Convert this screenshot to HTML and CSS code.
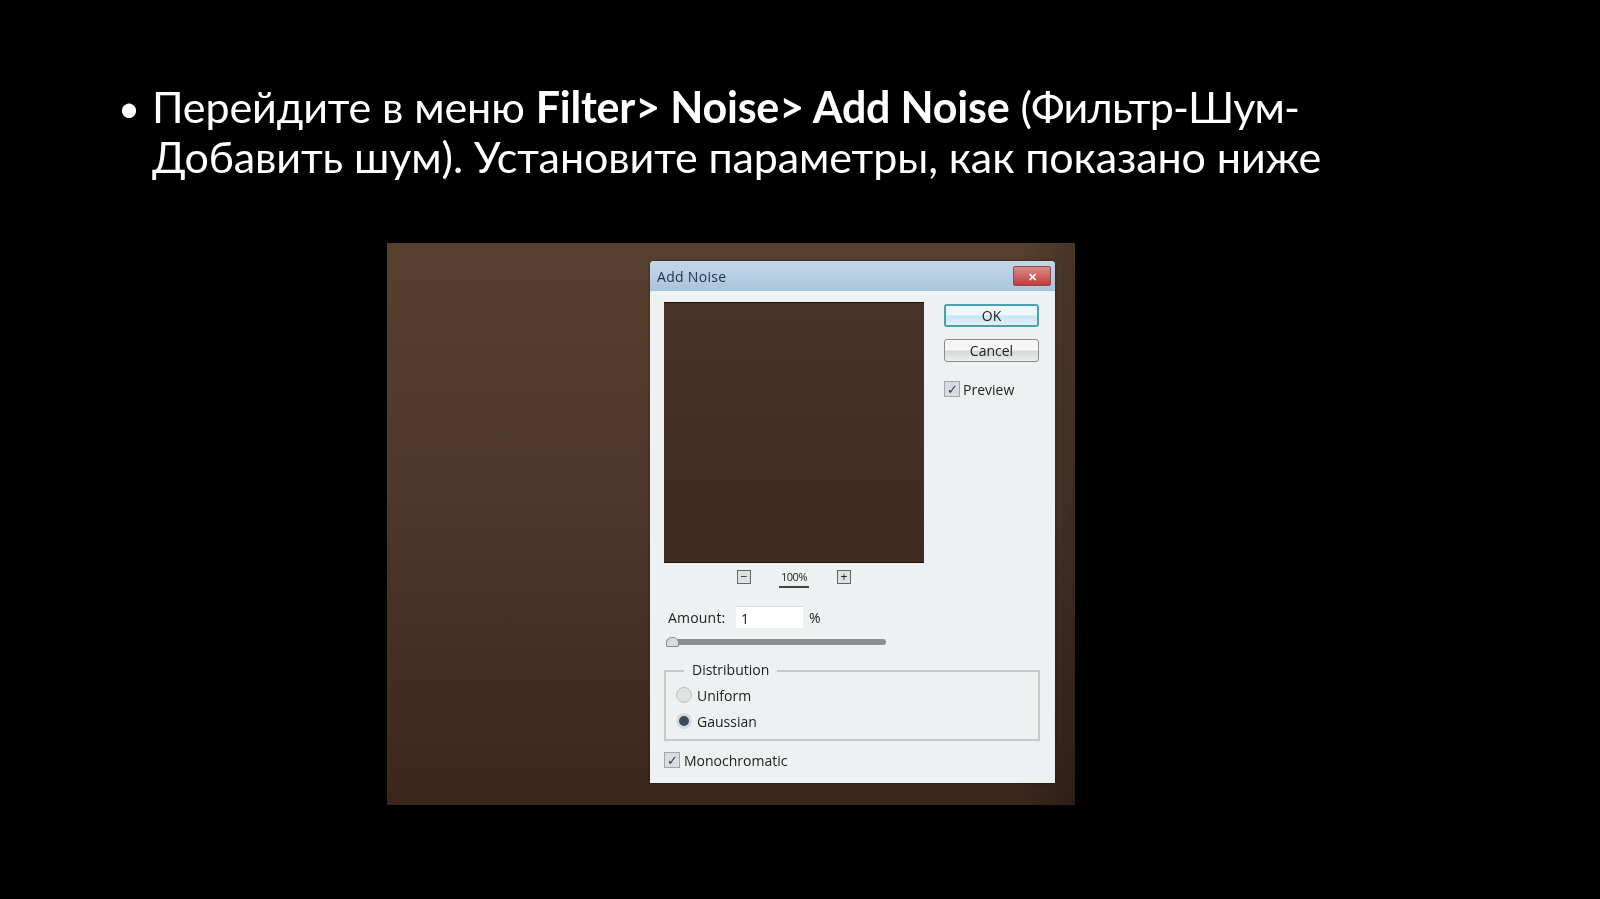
FILE: index.html
```html
<!DOCTYPE html>
<html lang="ru">
<head>
    <meta charset="UTF-8">
    <title>Add Noise</title>
    <link rel="stylesheet" href="styles.css">
</head>
<body>
    <div class="slide">
        <div class="point">
            <span class="bullet">•</span>
            <p>Перейдите в меню <b>Filter&gt; Noise&gt; Add Noise</b> <span class="tight">(Фильтр-Шум-</span>Добавить шум). Установите параметры, как показано ниже</p>
        </div>

        <div class="shot">
            <div class="dialog">
                <div class="titlebar">
                    <span class="title-text">Add Noise</span>
                    <span class="close">✕</span>
                </div>
                <div class="dialog-body">
                    <div class="main-col">
                        <div class="preview"></div>
                        <div class="zoom-row">
                            <span class="zoom-btn">−</span>
                            <span class="zoom-value">100%</span>
                            <span class="zoom-btn">+</span>
                        </div>
                        <div class="amount-row">
                            <span class="amount-label">Amount:</span>
                            <span class="amount-input">1</span>
                            <span>%</span>
                        </div>
                        <div class="slider"><span class="thumb"></span></div>
                    </div>
                    <div class="side-col">
                        <div class="btn btn-default">OK</div>
                        <div class="btn">Cancel</div>
                        <div class="check-row preview-row">
                            <span class="check">✓</span>
                            <span>Preview</span>
                        </div>
                    </div>
                </div>
                <div class="distribution">
                    <span class="legend">Distribution</span>
                    <div class="radio-row"><span class="radio"></span>Uniform</div>
                    <div class="radio-row"><span class="radio radio-on"></span>Gaussian</div>
                </div>
                <div class="check-row mono-row">
                    <span class="check">✓</span>
                    <span>Monochromatic</span>
                </div>
            </div>
        </div>
    </div>
</body>
</html>
```

FILE: styles.css
```css
html, body {
    margin: 0;
    height: 100%;
    background: #000;
}
.slide {
    height: 899px;
    overflow: hidden;
    padding-top: 82px;
    box-sizing: border-box;
}
.point {
    display: flex;
    padding-left: 118px;
    color: #fff;
    font-family: "Lato", "Liberation Sans", sans-serif;
    font-size: 43px;
    line-height: 50px;
    letter-spacing: -0.1px;
    filter: blur(0.3px);
}
.bullet {
    width: 34px;
    font-size: 38px;
}
.point p {
    margin: 0;
    width: 1190px;
}
.point b {
    letter-spacing: -0.2px;
}
.tight {
    letter-spacing: -0.8px;
}
.shot {
    width: 688px;
    height: 562px;
    margin: 61px 0 0 387px;
    padding: 18px 20px 22px 263px;
    box-sizing: border-box;
    background: linear-gradient(90deg, rgba(0,0,0,0) 92%, rgba(0,0,0,0.2) 100%), linear-gradient(180deg, #57402f 0%, #4e382c 45%, #3b261c 100%);
}
.dialog {
    height: 522px;
    border-radius: 4px 4px 0 0;
    background: #eef1f1;
    color: #222;
    font-family: "Open Sans", "Liberation Sans", sans-serif;
    font-size: 14px;
    box-shadow: 0 0 3px rgba(0,0,0,0.5);
    filter: blur(0.4px);
}
.titlebar {
    height: 30px;
    padding: 0 4px 0 7px;
    display: flex;
    justify-content: space-between;
    align-items: center;
    background: linear-gradient(180deg, #c5d7e8, #a9c4dc);
    color: #1f3147;
    border-radius: 4px 4px 0 0;
}
.title-text {
    letter-spacing: 0.3px;
}
.close {
    width: 38px;
    height: 20px;
    line-height: 20px;
    text-align: center;
    font-size: 11px;
    font-weight: bold;
    color: #fff;
    background: linear-gradient(180deg, #dc8c8c, #c23c3c);
    border: 1px solid #8e4a4a;
    box-sizing: border-box;
    border-radius: 2px;
}
.dialog-body {
    display: flex;
    padding: 11px 16px 0 14px;
}
.main-col {
    width: 260px;
}
.preview {
    width: 260px;
    height: 261px;
    background: linear-gradient(180deg, #493228, #3f2b20);
    border-top: 1px solid #1b100a;
    border-bottom: 1px solid #1b100a;
    box-sizing: border-box;
}
.zoom-row {
    display: flex;
    align-items: flex-start;
    padding: 7px 0 0 73px;
    height: 28px;
}
.zoom-btn {
    width: 14px;
    height: 14px;
    box-sizing: border-box;
    border: 1px solid #666;
    background: #dfe1e1;
    font-size: 12px;
    line-height: 11px;
    text-align: center;
}
.zoom-value {
    width: 30px;
    margin: 0 28px;
    font-size: 11px;
    line-height: 14px;
    padding-bottom: 2px;
    border-bottom: 2px solid #444;
    text-align: center;
    letter-spacing: -0.5px;
}
.amount-row {
    display: flex;
    align-items: center;
    height: 22px;
    margin-top: 8px;
    padding-left: 4px;
}
.amount-label {
    width: 68px;
    letter-spacing: 0.2px;
}
.amount-input {
    width: 67px;
    height: 22px;
    line-height: 24px;
    padding-left: 5px;
    margin-right: 6px;
    box-sizing: border-box;
    background: #fff;
    border-top: 1px solid #dcdcdc;
}
.slider {
    position: relative;
    width: 220px;
    height: 6px;
    margin: 11px 0 0 2px;
    background: #8e8f8c;
    border-radius: 3px;
}
.thumb {
    position: absolute;
    left: 0;
    top: -2px;
    width: 13px;
    height: 10px;
    box-sizing: border-box;
    border: 1px solid #8a8a8a;
    border-radius: 6px 6px 1px 1px;
    background: #dcdcd8;
}
.side-col {
    width: 96px;
    margin-left: 20px;
    padding-top: 2px;
}
.btn {
    height: 23px;
    line-height: 22px;
    margin-bottom: 12px;
    text-align: center;
    box-sizing: border-box;
    border: 1px solid #8b8b8b;
    border-radius: 3px;
    background: linear-gradient(180deg, #f6f6f6 45%, #d8d8d8 55%, #ececec);
}
.btn-default {
    border: 2px solid #4f9eb4;
    line-height: 20px;
    background: linear-gradient(180deg, #ecf7fb 45%, #c6e6f0 55%, #e2f3f8);
}
.check-row {
    display: flex;
    align-items: center;
    gap: 4px;
    height: 16px;
}
.preview-row {
    gap: 3px;
    margin-top: 19px;
}
.check {
    width: 16px;
    height: 16px;
    box-sizing: border-box;
    border: 1px solid #a6a6a6;
    background: #d9dde3;
    font-size: 13px;
    line-height: 14px;
    text-align: center;
    color: #333;
}
.distribution {
    position: relative;
    width: 376px;
    height: 71px;
    margin: 25px 0 0 14px;
    padding-top: 10px;
    box-sizing: border-box;
    border: 2px solid #c8caca;
}
.legend {
    position: absolute;
    left: 18px;
    top: -12px;
    padding: 0 8px;
    line-height: 20px;
    background: #eef1f1;
}
.radio-row {
    display: flex;
    align-items: center;
    gap: 5px;
    height: 26px;
    padding-left: 10px;
}
.radio {
    width: 16px;
    height: 16px;
    box-sizing: border-box;
    border: 1px solid #c2c2c2;
    border-radius: 50%;
    background: #e2e2e2;
}
.radio-on {
    border: 3px solid #d4dae0;
    background: #3a4a58;
}
.mono-row {
    margin: 11px 0 0 14px;
}
```
